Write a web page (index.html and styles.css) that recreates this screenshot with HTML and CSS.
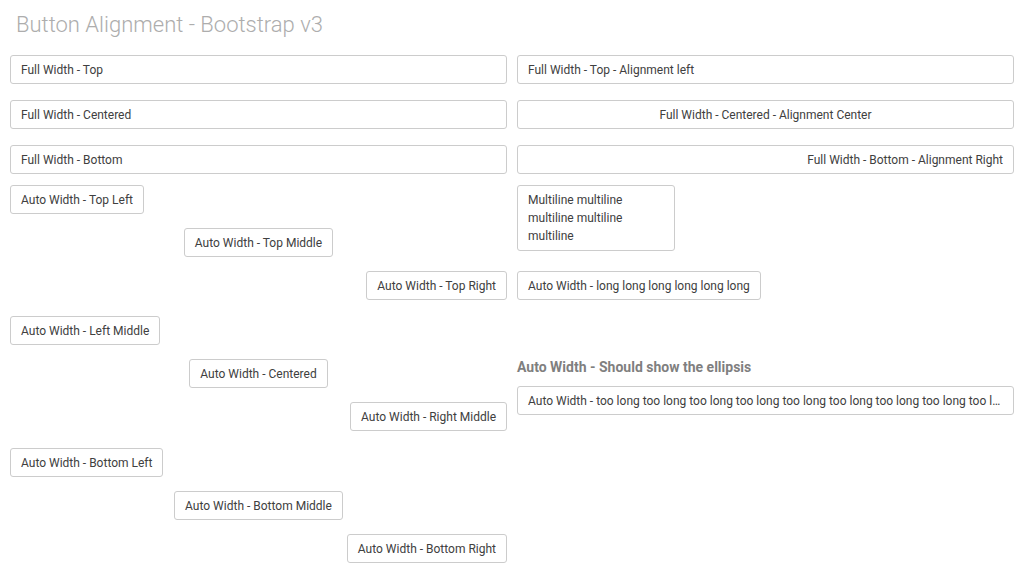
FILE: index.html
```html
<!DOCTYPE html>
<html>
<head>
<meta charset="utf-8">
<link rel="stylesheet" href="styles.css">
</head>
<body>
<h1 class="title">Button Alignment - Bootstrap v3</h1>
<div class="grid">
  <div class="col">
    <div class="full-stack">
      <button class="btn">Full Width - Top</button>
      <button class="btn">Full Width - Centered</button>
      <button class="btn">Full Width - Bottom</button>
    </div>
    <div class="group first">
      <button class="btn auto left">Auto Width - Top Left</button>
      <button class="btn auto middle">Auto Width - Top Middle</button>
      <button class="btn auto right">Auto Width - Top Right</button>
    </div>
    <div class="group">
      <button class="btn auto left">Auto Width - Left Middle</button>
      <button class="btn auto middle">Auto Width - Centered</button>
      <button class="btn auto right">Auto Width - Right Middle</button>
    </div>
    <div class="group last">
      <button class="btn auto left">Auto Width - Bottom Left</button>
      <button class="btn auto middle">Auto Width - Bottom Middle</button>
      <button class="btn auto right">Auto Width - Bottom Right</button>
    </div>
  </div>
  <div class="col">
    <div class="full-stack">
      <button class="btn">Full Width - Top - Alignment left</button>
      <button class="btn text-center">Full Width - Centered - Alignment Center</button>
      <button class="btn text-right">Full Width - Bottom - Alignment Right</button>
    </div>
    <div class="group first">
      <button class="btn auto left multiline">Multiline multiline multiline multiline multiline</button>
      <button class="btn auto left long">Auto Width - long long long long long long</button>
    </div>
    <h2 class="subtitle">Auto Width - Should show the ellipsis</h2>
    <button class="btn ellipsis">Auto Width - too long too long too long too long too long too long too long too long too long too long too long too long too long</button>
  </div>
</div>
</body>
</html>
```

FILE: styles.css
```css
html, body {
  margin: 0;
  padding: 0;
  background: #ffffff;
}

body {
  font-family: Roboto, "Liberation Sans", sans-serif;
  color: #404040;
  padding: 0 10px;
}

.title {
  margin: 0;
  padding: 12px 0 0 6px;
  height: 55px;
  box-sizing: border-box;
  font-size: 22px;
  font-weight: 300;
  line-height: 26px;
  color: #adadad;
}

.grid {
  display: grid;
  grid-template-columns: 1fr 1fr;
  column-gap: 10px;
}

.col {
  display: flex;
  flex-direction: column;
  min-width: 0;
}

.full-stack {
  display: flex;
  flex-direction: column;
  gap: 16px;
}

.group {
  display: flex;
  flex-direction: column;
  gap: 14px;
  margin-top: 16px;
}

.group.first {
  margin-top: 11px;
}

.group.last {
  margin-top: 17px;
}

.btn {
  display: block;
  font-family: inherit;
  font-size: 12px;
  line-height: 17px;
  color: #404040;
  background: #ffffff;
  border: 1px solid #cccccc;
  border-radius: 3px;
  padding: 6px 10px 4px 10px;
  text-align: left;
  white-space: nowrap;
  overflow: hidden;
  text-overflow: ellipsis;
  min-width: 0;
  height: 29px;
  box-sizing: border-box;
}

.text-center { text-align: center; }
.text-right { text-align: right; }

.auto { width: auto; }
.auto.left { align-self: flex-start; }
.auto.middle { align-self: center; }
.auto.right { align-self: flex-end; }

.multiline {
  white-space: normal;
  max-width: 158px;
  height: auto;
  line-height: 18px;
  padding: 5px 10px;
}

.long {
  margin-top: 6px;
}

.subtitle {
  margin: 58px 0 10px 0;
  font-size: 14px;
  font-weight: 700;
  line-height: 18px;
  color: #7f7f7f;
}

.ellipsis {
  width: 100%;
}
```
